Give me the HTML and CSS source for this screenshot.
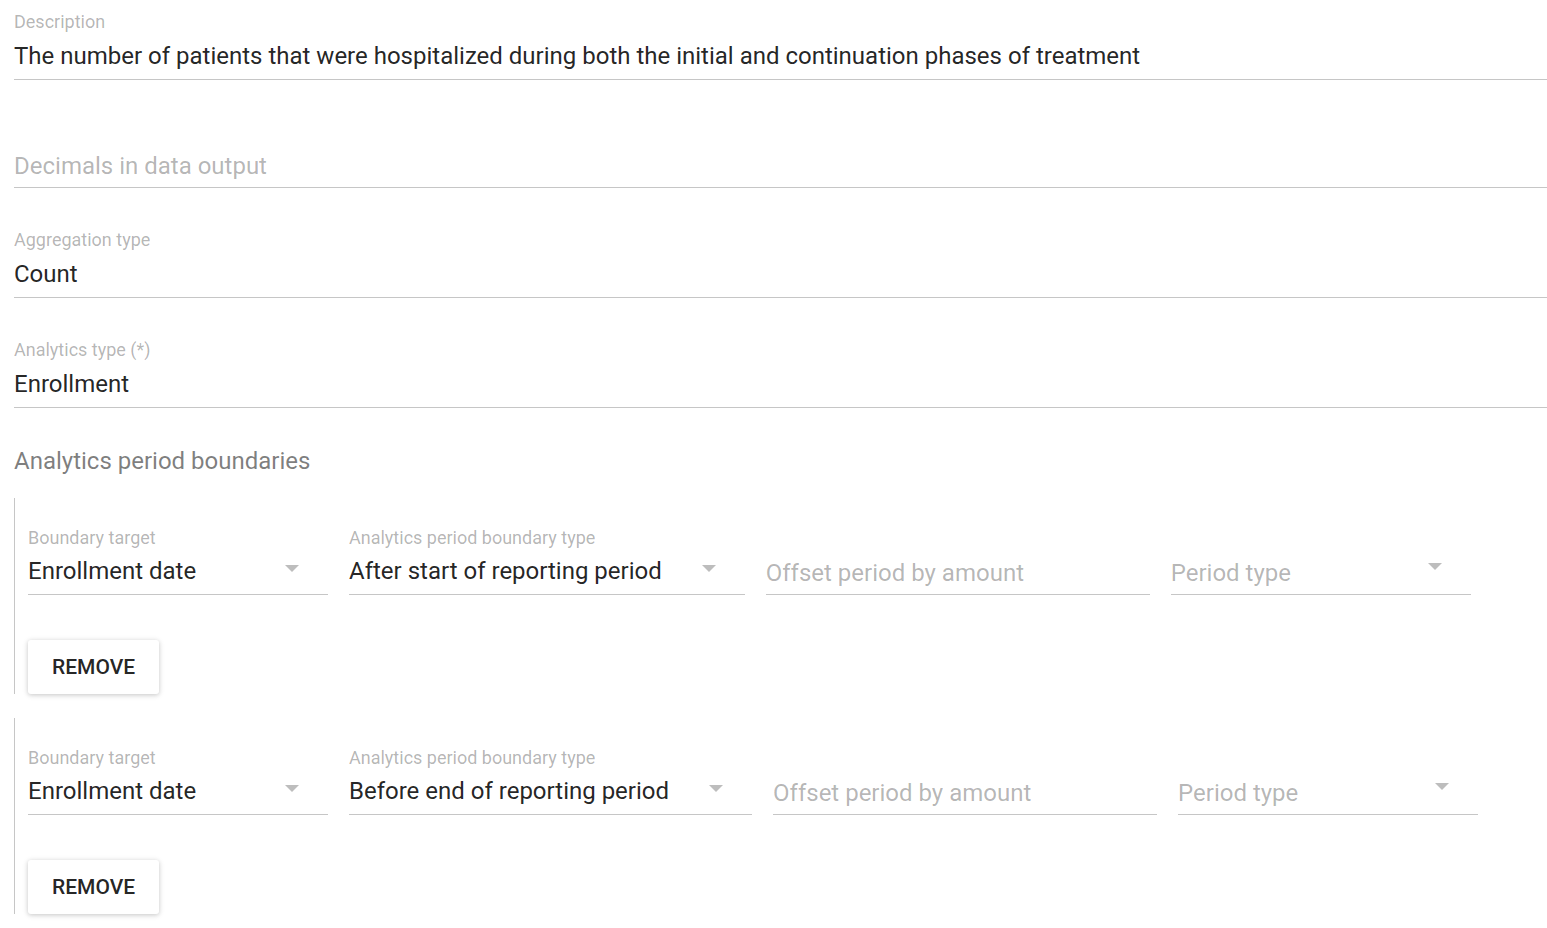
FILE: index.html
```html
<!DOCTYPE html>
<html>
<head>
<meta charset="utf-8">
<link rel="stylesheet" href="styles.css">
</head>
<body>
<div class="page">
  <div class="field">
    <div class="field-label">Description</div>
    <div class="field-value">The number of patients that were hospitalized during both the initial and continuation phases of treatment</div>
  </div>
  <div class="field field--tight">
    <div class="field-label"></div>
    <div class="field-value placeholder">Decimals in data output</div>
  </div>
  <div class="field">
    <div class="field-label">Aggregation type</div>
    <div class="field-value">Count</div>
  </div>
  <div class="field">
    <div class="field-label">Analytics type (*)</div>
    <div class="field-value">Enrollment</div>
  </div>

  <div class="section-title">Analytics period boundaries</div>

  <div class="boundary">
    <div class="boundary-row">
      <div class="select sel-target">
        <div class="field-label">Boundary target</div>
        <div class="field-value">Enrollment date</div>
        <span class="arrow"></span>
      </div>
      <div class="select sel-type">
        <div class="field-label">Analytics period boundary type</div>
        <div class="field-value">After start of reporting period</div>
        <span class="arrow"></span>
      </div>
      <div class="text-input offset">
        <div class="field-value placeholder">Offset period by amount</div>
      </div>
      <div class="select sel-period empty">
        <div class="field-value placeholder">Period type</div>
        <span class="arrow"></span>
      </div>
    </div>
    <button class="btn">REMOVE</button>
  </div>

  <div class="boundary">
    <div class="boundary-row">
      <div class="select sel-target">
        <div class="field-label">Boundary target</div>
        <div class="field-value">Enrollment date</div>
        <span class="arrow"></span>
      </div>
      <div class="select sel-type">
        <div class="field-label">Analytics period boundary type</div>
        <div class="field-value">Before end of reporting period</div>
        <span class="arrow"></span>
      </div>
      <div class="text-input offset">
        <div class="field-value placeholder">Offset period by amount</div>
      </div>
      <div class="select sel-period empty">
        <div class="field-value placeholder">Period type</div>
        <span class="arrow"></span>
      </div>
    </div>
    <button class="btn">REMOVE</button>
  </div>
</div>
</body>
</html>
```

FILE: styles.css
```css
html, body {
  margin: 0;
  padding: 0;
  background: #ffffff;
}

body {
  font-family: Roboto, "Liberation Sans", Arial, sans-serif;
  color: rgba(0, 0, 0, 0.87);
}

.page {
  padding: 10px 0 20px 14px;
}

.field {
  margin-top: 40px;
  padding-bottom: 8px;
  border-bottom: 1px solid #c6c6c6;
}

.field:first-child {
  margin-top: 0;
}

.field--tight {
  margin-top: 38px;
}

.field-label {
  font-size: 18px;
  line-height: 24px;
  height: 24px;
  color: rgba(0, 0, 0, 0.3);
  white-space: nowrap;
}

.field-value {
  margin-top: 6px;
  font-size: 24px;
  line-height: 30px;
  height: 30px;
  white-space: nowrap;
  color: rgba(0, 0, 0, 0.87);
}

.field .field-value {
  margin-top: 7px;
}

.field-value.placeholder {
  color: rgba(0, 0, 0, 0.3);
}

.field .field-value.placeholder {
  position: relative;
  top: 2px;
}

.section-title {
  margin-top: 38px;
  font-size: 24px;
  line-height: 30px;
  color: rgba(0, 0, 0, 0.52);
}

.boundary {
  margin-top: 22px;
  border-left: 1px solid #c6c6c6;
  padding: 28px 0 0 13px;
  display: flex;
  flex-direction: column;
  align-items: flex-start;
}

.boundary + .boundary {
  margin-top: 24px;
}

.boundary-row {
  display: flex;
  align-items: flex-end;
  gap: 21px;
}

.select,
.text-input {
  position: relative;
  padding-bottom: 8px;
  border-bottom: 1px solid #c6c6c6;
}

.select {
  min-width: 300px;
  box-sizing: border-box;
  padding-right: 83px;
}

.select.empty .field-value,
.text-input .field-value {
  position: relative;
  top: 2px;
}

.offset {
  width: 384px;
}

.arrow {
  position: absolute;
  right: 29px;
  bottom: 22px;
  width: 0;
  height: 0;
  border-left: 7px solid transparent;
  border-right: 7px solid transparent;
  border-top: 7px solid #bdbdbd;
}

.select.empty .arrow {
  bottom: 24px;
}

.btn {
  margin-top: 45px;
  height: 54px;
  padding: 0 24px;
  border: none;
  border-radius: 3px;
  background: #ffffff;
  font-family: Roboto, "Liberation Sans", Arial, sans-serif;
  font-size: 21px;
  font-weight: 500;
  color: rgba(0, 0, 0, 0.87);
  box-shadow: 0 1px 6px rgba(0, 0, 0, 0.12), 0 1px 4px rgba(0, 0, 0, 0.12);
  cursor: pointer;
}
```
